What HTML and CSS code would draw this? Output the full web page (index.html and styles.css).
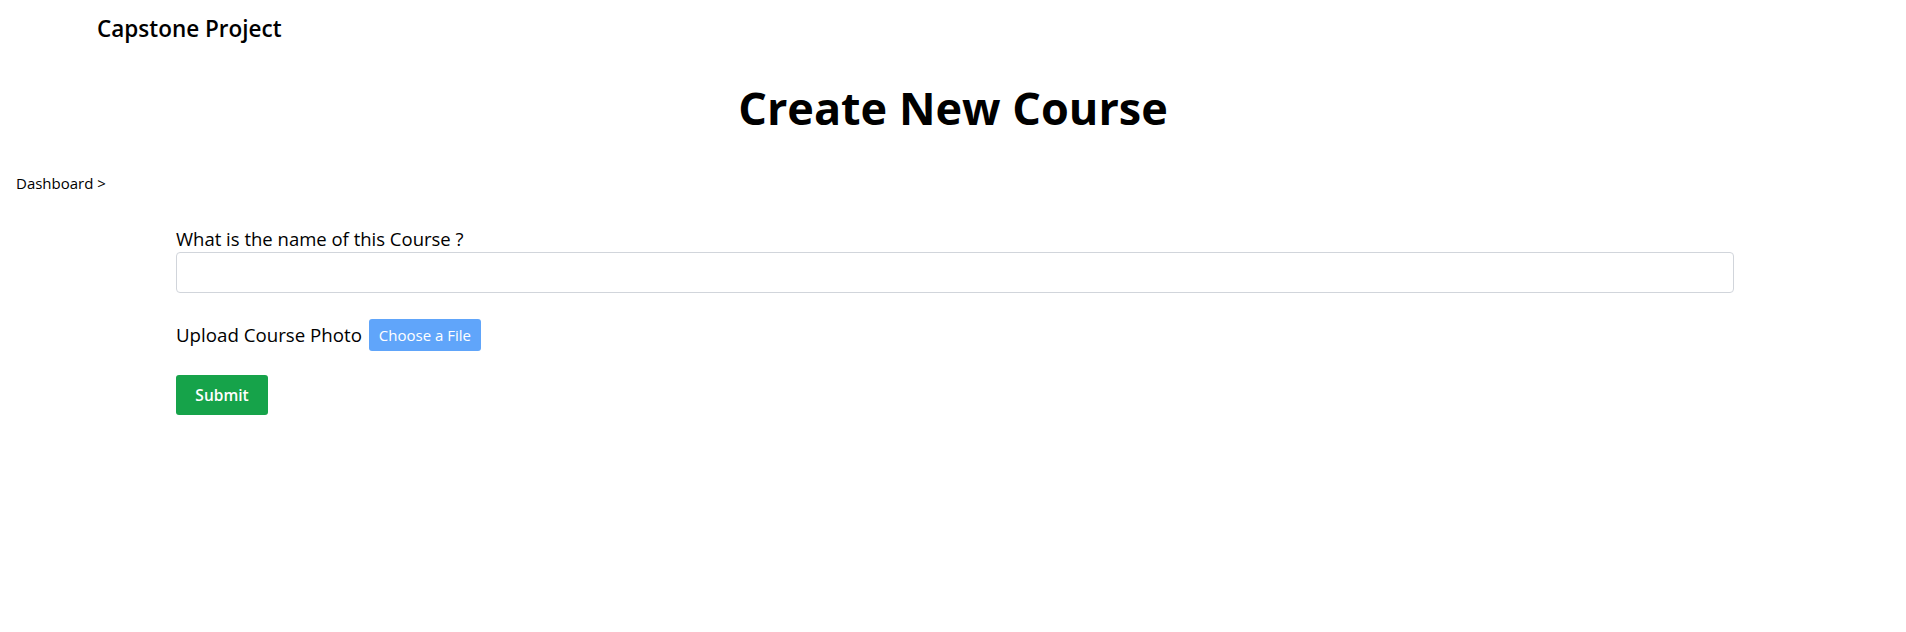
FILE: index.html
```html
<!DOCTYPE html>
<html lang="en">
<head>
<meta charset="utf-8">
<title>Create New Course</title>
<link rel="stylesheet" href="styles.css">
</head>
<body>
<header class="navbar">
  <span class="brand">Capstone Project</span>
</header>
<main>
  <h1 class="page-title">Create New Course</h1>
  <nav class="breadcrumb">Dashboard &gt;</nav>
  <form class="course-form">
    <div class="field">
      <label class="field-label" for="course-name">What is the name of this Course ?</label>
      <input class="text-input" id="course-name" type="text">
    </div>
    <div class="upload-row">
      <span class="upload-label">Upload Course Photo</span>
      <span class="file-btn">Choose a File</span>
    </div>
    <button class="submit-btn" type="button">Submit</button>
  </form>
</main>
</body>
</html>
```

FILE: styles.css
```css
* { box-sizing: border-box; }
html, body {
  margin: 0;
  padding: 0;
  background: #fff;
  color: #000;
  font-family: "Open Sans", "Noto Sans", sans-serif;
}
.navbar {
  height: 60px;
  padding: 13px 0 0 97px;
}
.brand {
  display: block;
  font-size: 22.5px;
  font-weight: 600;
  line-height: 32px;
}
.page-title {
  margin: 18px 0 0;
  text-align: center;
  font-size: 45px;
  font-weight: 700;
  line-height: 60px;
}
.breadcrumb {
  margin: 35px 0 0 16px;
  font-size: 15px;
  line-height: 20px;
}
.course-form {
  width: 1558px;
  margin: 35px 0 0 176px;
  display: flex;
  flex-direction: column;
  align-items: flex-start;
}
.field {
  width: 100%;
  display: flex;
  flex-direction: column;
}
.field-label {
  font-size: 18.5px;
  line-height: 22px;
}
.text-input {
  width: 100%;
  height: 41px;
  border: 1px solid #d1d5db;
  border-radius: 4px;
  margin-top: 2px;
}
.upload-row {
  margin-top: 26px;
  display: flex;
  align-items: center;
  gap: 7px;
}
.upload-label {
  font-size: 18.7px;
  line-height: 22px;
}
.file-btn {
  display: inline-flex;
  align-items: center;
  justify-content: center;
  width: 112px;
  height: 32px;
  background: #60a5fa;
  color: #fff;
  border-radius: 3px;
  font-size: 15px;
}
.submit-btn {
  margin-top: 24px;
  width: 92px;
  height: 40px;
  background: #16a34a;
  color: #fff;
  border: none;
  border-radius: 3px;
  font-family: inherit;
  font-size: 15.5px;
  font-weight: 600;
}
```
